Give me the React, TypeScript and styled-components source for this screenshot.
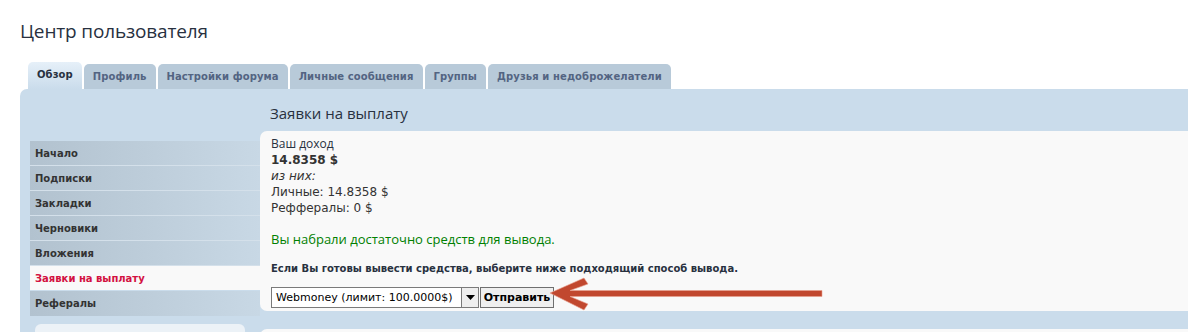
import React from 'react';
import styled, { createGlobalStyle } from 'styled-components';

const GlobalStyle = createGlobalStyle`
  html, body {
    margin: 0;
    padding: 0;
    background: #ffffff;
    overflow: hidden;
  }
  body {
    font-family: 'DejaVu Sans', Verdana, sans-serif;
    color: #28313f;
  }
`;

const Page = styled.div`
  width: 1188px;
  height: 332px;
  overflow: hidden;
  padding: 0 0 0 20px;
  box-sizing: border-box;
`;

const PageTitle = styled.h2`
  margin: 0;
  padding-top: 19px;
  height: 43px;
  box-sizing: border-box;
  font-family: 'Open Sans', 'Liberation Sans', sans-serif;
  font-weight: 400;
  font-size: 19px;
  letter-spacing: -0.15px;
  line-height: 24px;
  color: #28313f;
`;

const Tabs = styled.ul`
  display: flex;
  align-items: flex-end;
  gap: 2px;
  list-style: none;
  margin: 0;
  padding: 0 0 0 8px;
  height: 46px;
`;

const Tab = styled.li<{ active?: boolean }>`
  height: ${(p) => (p.active ? '27px' : '25px')};
  padding: 0 ${(p) => (p.active ? '9px' : '9px')};
  padding-bottom: ${(p) => (p.active ? '2px' : '0')};
  border-radius: 5px 5px 0 0;
  background: ${(p) =>
    p.active ? 'linear-gradient(#e6f0f9, #cadceb)' : '#b8cad9'};
  display: flex;
  align-items: center;
  box-sizing: border-box;
  font-size: 10px;
  font-weight: 700;
  letter-spacing: 0.1px;
  color: ${(p) => (p.active ? '#28313f' : '#536482')};
  white-space: nowrap;
`;

const Panel = styled.div`
  background: #cadceb;
  border-radius: 7px 0 0 0;
  display: flex;
  padding: 0 0 0 10px;
  height: 260px;
`;

const Sidebar = styled.div`
  width: 230px;
  flex-shrink: 0;
  padding-top: 52px;
`;

const Menu = styled.ul`
  list-style: none;
  margin: 0;
  padding: 0;
`;

const MenuItem = styled.li<{ active?: boolean }>`
  height: 25px;
  box-sizing: border-box;
  border-bottom: 1px solid ${(p) => (p.active ? '#cadceb' : '#d4e0ea')};
  padding: 0 5px;
  display: flex;
  align-items: center;
  font-size: 10px;
  font-weight: 700;
  color: ${(p) => (p.active ? '#d31141' : '#333333')};
  background: ${(p) =>
    p.active ? '#f9f9f9' : 'linear-gradient(to right, #b2c2cf, #c8d8e5)'};
  &:last-child {
    border-bottom: none;
  }
`;

const SideBox = styled.div`
  margin: 8px 15px 0 5px;
  height: 30px;
  border-radius: 6px;
  background: #ecf2f7;
`;

const Main = styled.div`
  flex: 1;
  display: flex;
  flex-direction: column;
`;

const Heading = styled.h3`
  margin: 0;
  padding: 14px 0 0 10px;
  height: 42px;
  box-sizing: border-box;
  font-family: 'Open Sans', 'Liberation Sans', sans-serif;
  font-weight: 400;
  font-size: 15px;
  line-height: 20px;
  color: #28313f;
`;

const ContentBox = styled.div`
  position: relative;
  background: #f9f9f9;
  border-radius: 7px 0 0 7px;
  padding: 5px 10px 0 11px;
  height: 181px;
  box-sizing: border-box;
`;

const NextBox = styled.div`
  margin-top: 18px;
  height: 20px;
  background: #f9f9f9;
  border-radius: 7px 0 0 0;
`;

const Label = styled.div`
  font-family: 'Open Sans', 'Liberation Sans', sans-serif;
  font-size: 12px;
  line-height: 16px;
  color: #28313f;
`;

const Line = styled.div<{ bold?: boolean; italic?: boolean }>`
  font-size: 12px;
  line-height: 16px;
  color: #333333;
  font-weight: ${(p) => (p.bold ? 700 : 400)};
  font-style: ${(p) => (p.italic ? 'italic' : 'normal')};
`;

const Success = styled.p`
  margin: 14px 0 0;
  font-family: 'Open Sans', 'Liberation Sans', sans-serif;
  font-size: 13px;
  line-height: 18px;
  color: #008000;
`;

const Hint = styled.p`
  margin: 14px 0 0;
  font-size: 10px;
  font-weight: 700;
  line-height: 14px;
  color: #28313f;
`;

const Form = styled.div`
  display: flex;
  align-items: stretch;
  margin-top: 11px;
  height: 21px;
`;

const Select = styled.div`
  display: flex;
  align-items: stretch;
  border: 1px solid #7a7a7a;
  background: #ffffff;
  box-sizing: border-box;
`;

const SelectText = styled.span`
  display: flex;
  align-items: center;
  padding: 0 4px;
  width: 189px;
  box-sizing: border-box;
  font-size: 11px;
  color: #000000;
  white-space: nowrap;
`;

const SelectArrow = styled.span`
  width: 16px;
  display: flex;
  align-items: center;
  justify-content: center;
  border-left: 1px solid #7a7a7a;
  background: #eeeeee;
`;

const Submit = styled.button`
  margin-left: 1px;
  width: 74px;
  padding: 0;
  border: 1px solid #6f6f6f;
  background: #efefef;
  font-family: 'DejaVu Sans', Verdana, sans-serif;
  font-size: 11px;
  font-weight: 700;
  color: #000000;
`;

const Pointer = styled.svg`
  position: absolute;
  left: 288px;
  top: 145px;
`;

const tabs = [
  'Обзор',
  'Профиль',
  'Настройки форума',
  'Личные сообщения',
  'Группы',
  'Друзья и недоброжелатели',
];

const menu = [
  'Начало',
  'Подписки',
  'Закладки',
  'Черновики',
  'Вложения',
  'Заявки на выплату',
  'Рефералы',
];

const App: React.FC = () => {
  return (
    <Page>
      <GlobalStyle />
      <PageTitle>Центр пользователя</PageTitle>
      <Tabs>
        {tabs.map((t, i) => (
          <Tab key={t} active={i === 0}>
            {t}
          </Tab>
        ))}
      </Tabs>
      <Panel>
        <Sidebar>
          <Menu>
            {menu.map((m) => (
              <MenuItem key={m} active={m === 'Заявки на выплату'}>
                {m}
              </MenuItem>
            ))}
          </Menu>
          <SideBox />
        </Sidebar>
        <Main>
          <Heading>Заявки на выплату</Heading>
          <ContentBox>
            <Label>Ваш доход</Label>
            <Line bold>14.8358 $</Line>
            <Line italic>из них:</Line>
            <Line>Личные: 14.8358 $</Line>
            <Line>Реффералы: 0 $</Line>
            <Success>Вы набрали достаточно средств для вывода.</Success>
            <Hint>
              Если Вы готовы вывести средства, выберите ниже подходящий способ
              вывода.
            </Hint>
            <Form>
              <Select>
                <SelectText>Webmoney (лимит: 100.0000$)</SelectText>
                <SelectArrow>
                  <svg width="9" height="5" viewBox="0 0 9 5">
                    <path d="M0 0h9L4.5 5z" fill="#000" />
                  </svg>
                </SelectArrow>
              </Select>
              <Submit>Отправить</Submit>
            </Form>
            <Pointer width="276" height="36" viewBox="0 0 276 36">
              <path
                d="M2 17 L36 2 L40 8 L22 14.5 L274 14.5 L274 20.5 L22 20.5 L40 28 L36 34 Z"
                fill="#c1482f"
                stroke="#e9a08f"
                strokeWidth="0.6"
              />
            </Pointer>
          </ContentBox>
          <NextBox />
        </Main>
      </Panel>
    </Page>
  );
};

export default App;
